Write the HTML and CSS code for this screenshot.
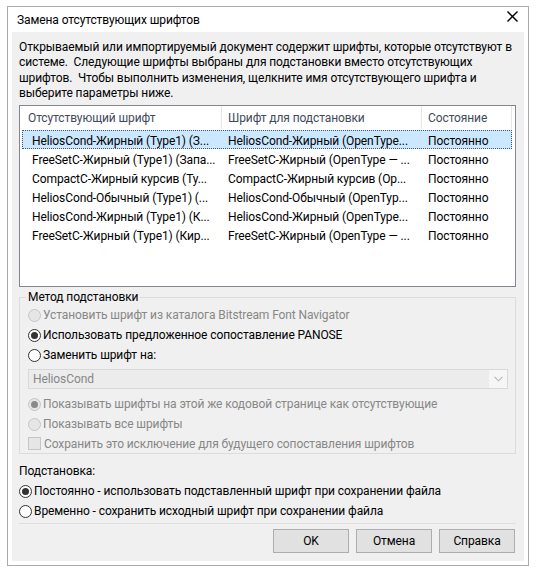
FILE: index.html
```html
<!DOCTYPE html>
<html>
<head>
    <meta charset="utf-8">
    <title>Замена отсутствующих шрифтов</title>
    <link rel="stylesheet" href="styles.css">
</head>
<body>

    <div class="dialog">
        <div class="titlebar">
            <span class="title">Замена отсутствующих шрифтов</span>
            <svg class="close" width="11" height="11" viewBox="0 0 11 11">
                <path d="M0.5 0.5 L10.5 10.5 M10.5 0.5 L0.5 10.5" stroke="#000" stroke-width="1.4" fill="none"/>
            </svg>
        </div>

        <div class="panel">
            <p class="intro">
                Открываемый или импортируемый документ содержит шрифты, которые отсутствуют в<br>
                системе.&nbsp; Следующие шрифты выбраны для подстановки вместо отсутствующих<br>
                шрифтов.&nbsp; Чтобы выполнить изменения, щелкните имя отсутствующего шрифта и<br>
                выберите параметры ниже.
            </p>

            <!-- list of missing fonts -->
            <div class="list">
                <div class="list-head">
                    <div class="cell c1">Отсутствующий шрифт</div>
                    <div class="cell c2">Шрифт для подстановки</div>
                    <div class="cell c3">Состояние</div>
                </div>
                <div class="rows">
                    <div class="row selected">
                        <div class="cell c1">HeliosCond-Жирный (Type1) (З...</div>
                        <div class="cell c2">HeliosCond-Жирный (OpenType...</div>
                        <div class="cell c3">Постоянно</div>
                    </div>
                    <div class="row">
                        <div class="cell c1">FreeSetC-Жирный (Type1) (Запа...</div>
                        <div class="cell c2">FreeSetC-Жирный (OpenType — ...</div>
                        <div class="cell c3">Постоянно</div>
                    </div>
                    <div class="row">
                        <div class="cell c1">CompactC-Жирный курсив (Ту...</div>
                        <div class="cell c2">CompactC-Жирный курсив (Op...</div>
                        <div class="cell c3">Постоянно</div>
                    </div>
                    <div class="row">
                        <div class="cell c1">HeliosCond-Обычный (Type1) (...</div>
                        <div class="cell c2">HeliosCond-Обычный (OpenTyp...</div>
                        <div class="cell c3">Постоянно</div>
                    </div>
                    <div class="row">
                        <div class="cell c1">HeliosCond-Жирный (Type1) (К...</div>
                        <div class="cell c2">HeliosCond-Жирный (OpenType...</div>
                        <div class="cell c3">Постоянно</div>
                    </div>
                    <div class="row">
                        <div class="cell c1">FreeSetC-Жирный (Type1) (Кир...</div>
                        <div class="cell c2">FreeSetC-Жирный (OpenType — ...</div>
                        <div class="cell c3">Постоянно</div>
                    </div>
                </div>
            </div>

            <!-- substitution method -->
            <fieldset class="group">
                <legend>Метод подстановки</legend>
                <div class="option disabled"><span class="radio"></span>Установить шрифт из каталога Bitstream Font Navigator</div>
                <div class="option"><span class="radio checked"></span>Использовать предложенное сопоставление PANOSE</div>
                <div class="option"><span class="radio"></span>Заменить шрифт на:</div>
                <div class="combo">
                    <span class="combo-text">HeliosCond</span>
                    <span class="combo-btn">
                        <svg width="9" height="6" viewBox="0 0 9 6">
                            <path d="M0.5 0.8 L4.5 4.8 L8.5 0.8" stroke="#b4b4b4" stroke-width="1.1" fill="none"/>
                        </svg>
                    </span>
                </div>
                <div class="option disabled after-combo"><span class="radio checked"></span>Показывать шрифты на этой же кодовой странице как отсутствующие</div>
                <div class="option disabled"><span class="radio"></span>Показывать все шрифты</div>
                <div class="option disabled short"><span class="checkbox"></span>Сохранить это исключение для будущего сопоставления шрифтов</div>
            </fieldset>

            <div class="subst-label">Подстановка:</div>
            <div class="subst">
                <div class="option"><span class="radio checked"></span>Постоянно - использовать подставленный шрифт при сохранении файла</div>
                <div class="option"><span class="radio"></span>Временно - сохранить исходный шрифт при сохранении файла</div>
            </div>

            <div class="separator"></div>

            <div class="buttons">
                <button>OK</button>
                <button>Отмена</button>
                <button>Справка</button>
            </div>
        </div>
    </div>

</body>
</html>
```

FILE: styles.css
```css
/* Basic page and dialog frame */
body {
    font-family: Roboto, "Noto Sans", sans-serif;
    font-size: 12px;
    letter-spacing: -0.1px;
    color: #000;
    background-color: #fff;
    margin: 0;
    padding: 0;
}

.dialog {
    margin: 6px 0 0 7px;
    width: 520px;
    height: 558px;
    border: 1px solid #ababab;
    background-color: #fff;
}

.titlebar {
    display: flex;
    justify-content: space-between;
    align-items: flex-start;
    height: 25px;
}

.title {
    line-height: 27px;
    padding-left: 9px;
}

.close {
    margin: 4px 10px 0 0;
}

.panel {
    margin: 0 4px;
    height: 529px;
    padding: 8px 8px 0 7px;
    box-sizing: border-box;
    background-color: #f0f0f0;
}

.intro {
    margin: 0;
    line-height: 15.3px;
    white-space: nowrap;
}

/* List view with missing fonts */
.list {
    margin-top: 4px;
    height: 182px;
    box-sizing: border-box;
    border: 1px solid #828790;
    background-color: #fff;
    padding: 0 2px;
}

.list-head {
    display: flex;
    height: 23px;
    color: #3f4b5c;
}

.list-head .cell {
    line-height: 23px;
    padding-top: 1px;
    border-right: 1px solid #e5e5e5;
}

.rows {
    padding-top: 1px;
}

.row {
    display: flex;
    height: 19px;
    box-sizing: border-box;
    width: 490px;
}

.cell {
    box-sizing: border-box;
    white-space: nowrap;
    overflow: hidden;
    padding-left: 6px;
    padding-top: 2px;
    line-height: 19px;
}

.c1 {
    width: 200px;
}

.c2 {
    width: 200px;
}

.c3 {
    width: 90px;
}

.row .c1 {
    padding-left: 10px;
}

.row.selected {
    background-color: #cce8ff;
    outline: 1px dotted #3c5a78;
    outline-offset: -1px;
}

/* Group box */
.group {
    margin: 2px 0 0 0;
    padding: 0 7px 0 8px;
    border: 1px solid #dcdcdc;
    min-width: 0;
}

.group legend {
    padding: 0 2px;
    margin-left: -2px;
    line-height: 16px;
}

.option {
    display: flex;
    align-items: center;
    height: 20px;
    white-space: nowrap;
}

.option.short {
    height: 19px;
}

.option.disabled {
    color: #878787;
}

.option.after-combo {
    margin-top: 5px;
}

.radio {
    width: 13px;
    height: 13px;
    box-sizing: border-box;
    border: 1px solid #333;
    border-radius: 50%;
    background-color: #fff;
    margin-right: 2px;
    display: flex;
    align-items: center;
    justify-content: center;
    flex-shrink: 0;
}

.radio.checked::after {
    content: "";
    width: 7px;
    height: 7px;
    border-radius: 50%;
    background-color: #333;
}

.disabled .radio {
    border-color: #c6c6c6;
    background-color: #e6e6e6;
}

.disabled .radio.checked::after {
    background-color: #8a8a8a;
}

.checkbox {
    width: 13px;
    height: 13px;
    box-sizing: border-box;
    border: 1px solid #c6c6c6;
    background-color: #e6e6e6;
    margin-right: 3px;
    flex-shrink: 0;
}

/* Disabled combo box */
.combo {
    display: flex;
    height: 20px;
    margin-top: 4px;
    box-sizing: border-box;
    border: 1px solid #d9d9d9;
    background-color: #ececec;
}

.combo-text {
    flex: 1;
    color: #878787;
    line-height: 19px;
    padding-left: 4px;
}

.combo-btn {
    width: 18px;
    background-color: #f6f6f6;
    display: flex;
    align-items: center;
    justify-content: center;
}

/* Substitution choice */
.subst-label {
    margin-top: 9px;
    line-height: 16px;
}

.subst {
    margin-top: 2px;
}

.separator {
    margin-top: 2px;
    height: 1px;
    background-color: #dfdfdf;
}

.buttons {
    display: flex;
    justify-content: flex-end;
    gap: 7px;
    margin-top: 5px;
    padding-right: 1px;
}

.buttons button {
    width: 76px;
    height: 24px;
    font-family: Roboto, "Noto Sans", sans-serif;
    font-size: 12px;
    letter-spacing: -0.1px;
    color: #000;
    background-color: #e1e1e1;
    border: 1px solid #adadad;
    padding: 0;
}
```
